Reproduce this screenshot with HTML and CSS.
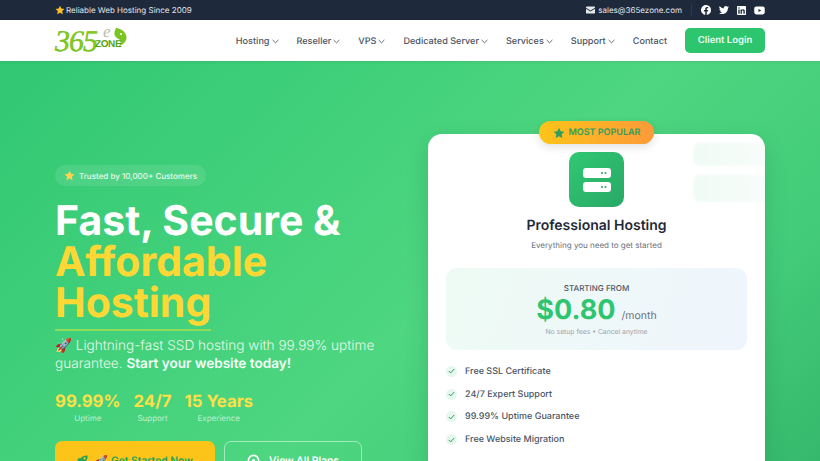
FILE: index.html
```html
<!DOCTYPE html>
<html>
<head>
  <meta charset="UTF-8">
  <title>365eZone</title>
  <link rel="stylesheet" href="styles.css">
</head>
<body>
  <div class="topbar">
    <div class="topbar-left">
      <svg class="star" width="10" height="10" viewBox="0 0 24 24"><path fill="#fbbf24" d="M12 1.500l3.300 6.900 7.500 1-5.500 5.200 1.400 7.500L12 18.500l-6.700 3.600 1.400-7.500L1.200 9.400l7.500-1z"/></svg>
      <span>Reliable Web Hosting Since 2009</span>
    </div>
    <div class="topbar-right">
      <svg width="9" height="8" viewBox="0 0 20 16"><path fill="#e5e7eb" d="M2 0h16a2 2 0 0 1 2 2v1l-10 6L0 3V2a2 2 0 0 1 2-2zM0 5.400l10 6 10-6V14a2 2 0 0 1-2 2H2a2 2 0 0 1-2-2z"/></svg>
      <span class="mail">sales@365ezone.com</span>
      <span class="divider"></span>
      <div class="social">
        <svg width="10" height="10" viewBox="0 0 24 24"><path fill="#fff" d="M24 12a12 12 0 1 0-13.900 11.900v-8.400H7.100V12h3V9.400c0-3 1.800-4.700 4.500-4.700 1.300 0 2.700.2 2.700.2v3h-1.500c-1.500 0-2 .9-2 1.900V12h3.400l-.5 3.500h-2.800v8.400A12 12 0 0 0 24 12z"/></svg>
        <svg width="10" height="10" viewBox="0 0 24 24"><path fill="#fff" d="M23.900 4.600a9.800 9.800 0 0 1-2.800.8 4.900 4.900 0 0 0 2.100-2.700 9.800 9.800 0 0 1-3.100 1.200 4.900 4.900 0 0 0-8.400 4.500A14 14 0 0 1 1.600 3.200a4.900 4.900 0 0 0 1.500 6.600 4.900 4.900 0 0 1-2.200-.6v.1a4.900 4.900 0 0 0 3.900 4.800 4.900 4.900 0 0 1-2.200.1 4.900 4.900 0 0 0 4.600 3.400A9.900 9.900 0 0 1 0 19.600a13.900 13.900 0 0 0 7.500 2.200c9.100 0 14-7.500 14-14v-.6a10 10 0 0 0 2.400-2.600z"/></svg>
        <svg width="9" height="9" viewBox="0 0 24 24"><path fill="#fff" fill-rule="evenodd" d="M2 0h20a2 2 0 0 1 2 2v20a2 2 0 0 1-2 2H2a2 2 0 0 1-2-2V2a2 2 0 0 1 2-2zm1.500 9v11.500h3.600V9zm1.800-5.500a2 2 0 1 0 0 4.100 2 2 0 0 0 0-4.100zM9.500 9v11.500h3.600v-5.700c0-1.500.3-3 2.200-3 1.800 0 1.800 1.700 1.800 3.100v5.600h3.600v-6.300c0-3.100-.7-5.500-4.300-5.500-1.700 0-2.900.9-3.400 1.900V9z"/></svg>
        <svg width="11" height="11" viewBox="0 0 24 24"><path fill="#fff" fill-rule="evenodd" d="M5 3.500h14A4.500 4.500 0 0 1 23.500 8v8a4.500 4.500 0 0 1-4.500 4.500H5A4.500 4.500 0 0 1 .5 16V8A4.500 4.500 0 0 1 5 3.500zM9.800 8.500v7l6.200-3.500z"/></svg>
      </div>
    </div>
  </div>

  <div class="navbar">
    <div class="logo">
      <span class="logo-num">365</span>
      <span class="logo-e">e</span>
      <svg class="logo-leaf" width="14" height="19" viewBox="0 0 14 19"><path fill="#7cc520" d="M3 0c5 .5 10 4 10.500 9 .3 4-3 7.500-8 9.500 2-2.500 2.500-4.500 1.500-6.500C5.500 10.500 2 9.500 1.500 6.500 1.200 4 2 2 3 0z"/><circle cx="8" cy="6" r="1" fill="#fff"/></svg>
      <span class="logo-zone">ZONE</span>
    </div>
    <div class="nav-links">
      <a class="nav-link">Hosting <svg class="chev" width="7" height="5" viewBox="0 0 8 5"><path d="M.7.8L4 4l3.300-3.200"/></svg></a>
      <a class="nav-link">Reseller <svg class="chev" width="7" height="5" viewBox="0 0 8 5"><path d="M.7.8L4 4l3.300-3.200"/></svg></a>
      <a class="nav-link">VPS <svg class="chev" width="7" height="5" viewBox="0 0 8 5"><path d="M.7.8L4 4l3.300-3.200"/></svg></a>
      <a class="nav-link">Dedicated Server <svg class="chev" width="7" height="5" viewBox="0 0 8 5"><path d="M.7.8L4 4l3.300-3.200"/></svg></a>
      <a class="nav-link">Services <svg class="chev" width="7" height="5" viewBox="0 0 8 5"><path d="M.7.8L4 4l3.300-3.200"/></svg></a>
      <a class="nav-link">Support <svg class="chev" width="7" height="5" viewBox="0 0 8 5"><path d="M.7.8L4 4l3.300-3.200"/></svg></a>
      <a class="nav-link">Contact</a>
      <a class="login-btn">Client Login</a>
    </div>
  </div>

  <div class="hero">
    <div class="hero-left">
      <div class="trust-pill">
        <svg width="11" height="11" viewBox="0 0 24 24"><path fill="#fcd34d" d="M12 1.500l3.300 6.900 7.500 1-5.500 5.200 1.400 7.500L12 18.500l-6.700 3.600 1.400-7.500L1.200 9.400l7.500-1z"/></svg>
        <span>Trusted by 10,000+ Customers</span>
      </div>
      <h1 class="hero-title">Fast, Secure &amp;<br><span class="yellow">Affordable<br><span class="underlined">Hosting</span></span></h1>
      <p class="hero-sub"><span class="rocket">🚀</span> Lightning-fast SSD hosting with 99.99% uptime guarantee. <strong>Start your website today!</strong></p>
      <div class="stats">
        <div class="stat"><div class="stat-num">99.99%</div><div class="stat-label">Uptime</div></div>
        <div class="stat"><div class="stat-num">24/7</div><div class="stat-label">Support</div></div>
        <div class="stat"><div class="stat-num">15 Years</div><div class="stat-label">Experience</div></div>
      </div>
      <div class="cta-row">
        <a class="cta-primary">
          <svg class="cta-rocket" width="11" height="11" viewBox="0 0 24 24"><path fill="#22a35a" d="M23 1c-6-.6-11 1-15 6H3L0 12l5 1 6 6 1 5 5-3v-5c5-4 6.600-9 6-15zM16.500 10a2.500 2.500 0 1 1 0-5 2.500 2.500 0 0 1 0 5zM4 17c-2 1-3 3.500-3 6 2.500 0 5-1 6-3z"/></svg>
          <span class="rocket">🚀</span> Get Started Now
        </a>
        <a class="cta-outline">
          <svg width="13" height="13" viewBox="0 0 24 24"><circle cx="12" cy="12" r="9.500" fill="none" stroke="#fff" stroke-width="3"/><circle cx="12" cy="12" r="3" fill="#fff"/></svg>
          View All Plans
        </a>
      </div>
    </div>

    <div class="card-wrap">
      <div class="badge">
        <svg width="12" height="12" viewBox="0 0 24 24"><path fill="#2d9e5f" d="M12 1.500l3.300 6.900 7.500 1-5.500 5.200 1.400 7.500L12 18.500l-6.700 3.600 1.400-7.500L1.200 9.400l7.500-1z"/></svg>
        MOST POPULAR
      </div>
      <div class="card">
        <div class="ghost ghost-one"></div>
        <div class="ghost ghost-two"></div>
        <div class="plan-icon">
          <svg width="28" height="24" viewBox="0 0 28 24">
            <rect width="28" height="10" rx="3" fill="#fff"/>
            <rect y="14" width="28" height="10" rx="3" fill="#fff"/>
            <circle cx="19" cy="5" r="1.100" fill="#2bb673"/><circle cx="22.500" cy="5" r="1.100" fill="#2bb673"/>
            <circle cx="19" cy="19" r="1.100" fill="#2bb673"/><circle cx="22.500" cy="19" r="1.100" fill="#2bb673"/>
          </svg>
        </div>
        <h2 class="plan-name">Professional Hosting</h2>
        <p class="plan-desc">Everything you need to get started</p>
        <div class="price-box">
          <div class="price-from">STARTING FROM</div>
          <div class="price-line"><span class="price">$0.80</span><span class="per">/month</span></div>
          <div class="price-note">No setup fees • Cancel anytime</div>
        </div>
        <ul class="features">
          <li><span class="tick"><svg width="7" height="6" viewBox="0 0 7 6"><path d="M.8 3l1.900 1.900L6.200 1"/></svg></span>Free SSL Certificate</li>
          <li><span class="tick"><svg width="7" height="6" viewBox="0 0 7 6"><path d="M.8 3l1.900 1.900L6.200 1"/></svg></span>24/7 Expert Support</li>
          <li><span class="tick"><svg width="7" height="6" viewBox="0 0 7 6"><path d="M.8 3l1.900 1.900L6.200 1"/></svg></span>99.99% Uptime Guarantee</li>
          <li><span class="tick"><svg width="7" height="6" viewBox="0 0 7 6"><path d="M.8 3l1.900 1.900L6.200 1"/></svg></span>Free Website Migration</li>
        </ul>
      </div>
    </div>
  </div>
</body>
</html>
```

FILE: styles.css
```css
* {
  box-sizing: border-box;
}

html, body {
  height: 461px;
  overflow: hidden;
}

body {
  margin: 0;
  font-family: Inter, 'Liberation Sans', sans-serif;
  text-rendering: geometricPrecision;
  background: #fff;
  color: #333;
}

.topbar {
  height: 20px;
  background: #1e293b;
  color: #e5e7eb;
  font-size: 8px;
  padding: 0 55px;
  display: flex;
  align-items: center;
  justify-content: space-between;
}

.topbar-left,
.topbar-right {
  display: flex;
  align-items: center;
}

.topbar-left .star {
  margin-right: 1px;
}

.mail {
  margin-left: 3px;
}

.divider {
  width: 1px;
  height: 12px;
  background: #2d3a4d;
  margin: 0 9px;
}

.social {
  display: flex;
  align-items: center;
  gap: 8px;
}

.navbar {
  height: 41px;
  background: #fff;
  padding: 0 55px;
  display: flex;
  align-items: center;
  justify-content: space-between;
  box-shadow: 0 1px 3px rgba(0,0,0,0.08);
  position: relative;
}

.logo {
  position: relative;
  width: 74px;
  height: 28px;
}

.logo-num {
  position: absolute;
  left: 0;
  top: 1px;
  font-family: 'Liberation Serif', serif;
  font-style: italic;
  font-size: 30px;
  line-height: 28px;
  letter-spacing: -1px;
  color: #84cc16;
  -webkit-text-stroke: 0.4px #5fae12;
}

.logo-zone {
  position: absolute;
  left: 40px;
  top: 12px;
  font-family: 'Liberation Sans', sans-serif;
  font-weight: 700;
  font-size: 10px;
  line-height: 12px;
  letter-spacing: -0.4px;
  color: #5aa50f;
}

.logo-e {
  position: absolute;
  left: 48px;
  top: -3px;
  font-family: 'Liberation Serif', serif;
  font-style: italic;
  font-size: 17px;
  line-height: 16px;
  color: #b9bdb0;
}

.logo-leaf {
  position: absolute;
  left: 58px;
  top: 1px;
}

.nav-links {
  display: flex;
  align-items: center;
  gap: 18px;
}

.nav-link {
  padding-top: 1px;
  font-size: 9.1px;
  font-weight: 500;
  color: #4b5563;
  display: flex;
  align-items: center;
  gap: 2px;
}

.chev {
  fill: none;
  stroke: #4b5563;
  stroke-width: 1;
}

.login-btn {
  width: 80px;
  height: 25px;
  background: #2ec56f;
  color: #eafff2;
  font-size: 9.5px;
  font-weight: 600;
  border-radius: 5px;
  display: flex;
  align-items: center;
  justify-content: center;
}

.hero {
  height: 400px;
  background: linear-gradient(135deg, #31c873 0%, #4ed680 55%, #43cc79 80%, #35b86c 100%);
  padding: 0 55px;
  display: flex;
  justify-content: space-between;
  overflow: hidden;
}

.hero-left {
  width: 330px;
  padding-top: 104px;
}

.trust-pill {
  display: inline-flex;
  align-items: center;
  gap: 4px;
  height: 21px;
  padding: 0 9px;
  border-radius: 11px;
  background: rgba(255,255,255,0.1);
  color: #e7fbef;
  font-size: 8px;
  font-weight: 500;
}

.hero-title {
  margin: 14px 0 0;
  font-size: 41px;
  line-height: 41px;
  font-weight: 700;
  color: #fff;
}

.yellow {
  color: #fdd835;
}

.underlined {
  display: inline-block;
  border-bottom: 2px solid #8fdc58;
  padding-bottom: 6px;
}

.hero-sub {
  margin: 6px 0 0;
  font-size: 13.6px;
  line-height: 18px;
  font-weight: 300;
  color: #e3f9ea;
}

.hero-sub strong {
  font-weight: 600;
  color: #f3fff7;
}

.rocket {
  font-family: 'Noto Color Emoji', sans-serif;
}

.stats {
  display: flex;
  gap: 13px;
  margin-top: 19px;
}

.stat {
  text-align: center;
}

.stat-num {
  font-size: 16.8px;
  line-height: 20px;
  font-weight: 700;
  color: #fde047;
}

.stat-label {
  font-size: 8px;
  line-height: 12px;
  color: #bff0cf;
}

.cta-row {
  display: flex;
  gap: 9px;
  margin-top: 17px;
}

.cta-primary,
.cta-outline {
  height: 39px;
  border-radius: 7px;
  font-size: 10.3px;
  font-weight: 600;
  display: flex;
  align-items: center;
  justify-content: center;
  gap: 3px;
}

.cta-primary {
  width: 160px;
  background: #fcc419;
  color: #22a35a;
}

.cta-rocket {
  margin-right: 4px;
}

.cta-outline {
  width: 138px;
  gap: 9px;
  border: 1px solid rgba(255,255,255,0.5);
  color: #fff;
}

.card-wrap {
  position: relative;
  width: 337px;
  padding-top: 73px;
}

.badge {
  position: absolute;
  top: 60px;
  left: 111px;
  z-index: 2;
  width: 115px;
  height: 23px;
  border-radius: 12px;
  background: linear-gradient(90deg, #fcc419, #fd9a3a);
  color: #2d9e5f;
  font-size: 9px;
  font-weight: 600;
  display: flex;
  align-items: center;
  justify-content: center;
  gap: 4px;
  box-shadow: 0 3px 8px rgba(0,0,0,0.12);
}

.card {
  position: relative;
  height: 360px;
  background: #fff;
  border-radius: 14px;
  padding: 18px 18px 0;
  box-shadow: 0 8px 24px rgba(0,0,0,0.12);
  overflow: hidden;
}

.ghost {
  position: absolute;
  right: -4px;
  width: 76px;
  border-radius: 8px;
  background: linear-gradient(90deg, #f0fbf5, #f8fdfa);
  filter: blur(1px);
}

.ghost-one {
  top: 9px;
  height: 23px;
}

.ghost-two {
  top: 41px;
  height: 27px;
}

.plan-icon {
  width: 55px;
  height: 55px;
  margin: 0 auto;
  border-radius: 10px;
  background: linear-gradient(135deg, #31c873, #28a866);
  display: flex;
  align-items: center;
  justify-content: center;
}

.plan-name {
  margin: 10px 0 0;
  text-align: center;
  font-size: 14px;
  line-height: 18px;
  font-weight: 600;
  color: #1f2937;
}

.plan-desc {
  margin: 4px 0 0;
  text-align: center;
  font-size: 8px;
  line-height: 12px;
  color: #6b7280;
}

.price-box {
  margin-top: 17px;
  height: 82px;
  padding-top: 15px;
  border-radius: 11px;
  background: linear-gradient(110deg, #eefbf4, #eff5fd);
  text-align: center;
}

.price-from {
  font-size: 8px;
  line-height: 11px;
  font-weight: 500;
  color: #4b5563;
}

.price-line {
  display: flex;
  align-items: baseline;
  justify-content: center;
  gap: 6px;
}

.price {
  font-size: 27px;
  line-height: 31px;
  font-weight: 700;
  color: #2ec56f;
}

.per {
  font-size: 10.5px;
  color: #6b7280;
}

.price-note {
  margin-top: 1px;
  font-size: 6.8px;
  line-height: 11px;
  color: #9ca3af;
}

.features {
  list-style: none;
  margin: 10px 0 0;
  padding: 0;
}

.features li {
  display: flex;
  align-items: center;
  height: 22.8px;
  font-size: 9px;
  font-weight: 500;
  color: #4b5563;
}

.tick {
  width: 11px;
  height: 11px;
  margin-right: 8px;
  border-radius: 50%;
  background: #e6f8ee;
  display: flex;
  align-items: center;
  justify-content: center;
}

.tick svg {
  fill: none;
  stroke: #2a9d64;
  stroke-width: 1;
}
```
